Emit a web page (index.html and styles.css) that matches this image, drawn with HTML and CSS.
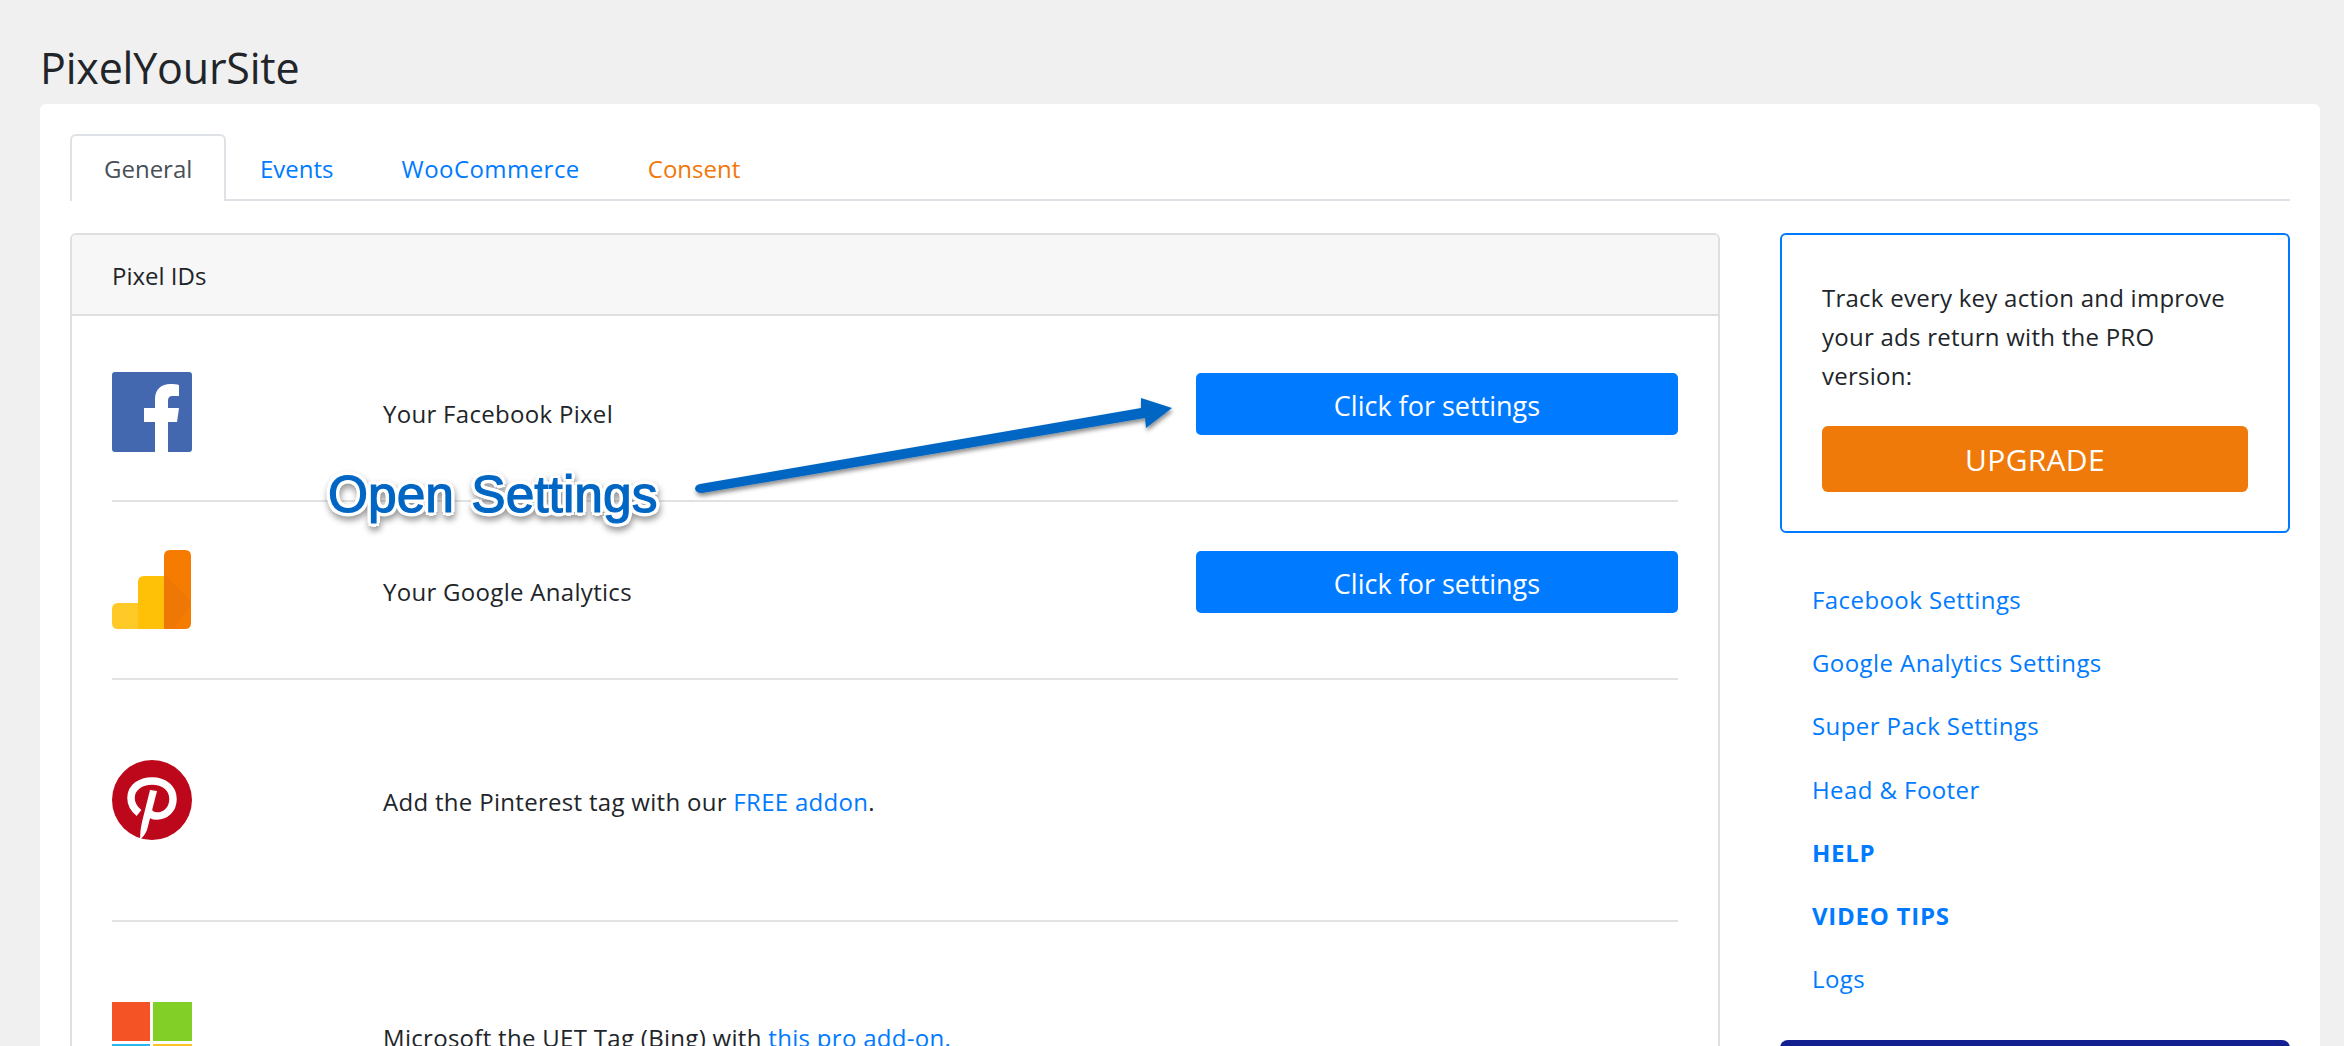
FILE: index.html
```html
<!DOCTYPE html>
<html lang="en">
<head>
<meta charset="utf-8">
<title>PixelYourSite</title>
<link rel="stylesheet" href="styles.css">
</head>
<body>
<h1 class="page-title">PixelYourSite</h1>
<main class="card">
  <nav class="tabs">
    <a class="tab tab-active">General</a>
    <a class="tab">Events</a>
    <a class="tab tab-wide">WooCommerce</a>
    <a class="tab tab-orange">Consent</a>
  </nav>
  <div class="columns">
    <section class="panel">
      <header class="panel-head">Pixel IDs</header>
      <div class="panel-body">
        <div class="row row-first">
          <svg class="icon" viewBox="0 0 80 80"><rect width="80" height="80" rx="3" fill="#4468b0"/><path fill="#fff" d="M43 80V50H32V36H43V27C43 17 50 12 58 12C62 12 65 12 67 13V24H61C57 24 56 26 56 29V36H67L65 50H56V80Z"/></svg>
          <p class="row-text">Your Facebook Pixel</p>
          <a class="btn-settings">Click for settings</a>
        </div>
        <div class="row row-second">
          <svg class="icon" viewBox="0 0 80 80"><path fill="#ffca28" d="M6 53H28V79H6Q0 79 0 73V59Q0 53 6 53Z"/><path fill="#ffc107" d="M32 26H54V79H26V32Q26 26 32 26Z"/><path fill="#f57c00" d="M52 6Q52 0 58 0H73Q79 0 79 6V73Q79 79 73 79H52Z"/><path fill="#e8710a" opacity=".45" d="M52 24L78 50V56L62 79H52Z"/></svg>
          <p class="row-text">Your Google Analytics</p>
          <a class="btn-settings">Click for settings</a>
        </div>
        <div class="row row-tall">
          <svg class="icon" viewBox="0 0 80 80"><circle cx="40" cy="40" r="40" fill="#bd081c"/><path fill="none" stroke="#fff" stroke-width="7.5" d="M27 53C22 49 19 44 19 38C19 27 29 21 40 21C52 21 61 28 61 39C61 50 53 56 45 56C41 56 38 54 37 52"/><path fill="#fff" d="M38 30L45 31L35 70Q32 77 28 79Q28 70 30 62Z"/></svg>
          <p class="row-text">Add the Pinterest tag with our <a class="link">FREE addon</a>.</p>
        </div>
        <div class="row row-last">
          <svg class="icon" viewBox="0 0 80 80"><rect width="38" height="39" fill="#f35325"/><rect x="41" width="39" height="39" fill="#81cf27"/><rect y="42" width="38" height="38" fill="#29b6ef"/><rect x="41" y="42" width="39" height="38" fill="#fdc326"/></svg>
          <p class="row-text">Microsoft the UET Tag (Bing) with <a class="link">this pro add-on.</a></p>
        </div>
      </div>
    </section>
    <aside class="side">
      <div class="promo">
        <p class="promo-text">Track every key action and improve your ads return with the PRO version:</p>
        <a class="btn-upgrade">UPGRADE</a>
      </div>
      <ul class="side-links">
        <li><a class="link">Facebook Settings</a></li>
        <li><a class="link">Google Analytics Settings</a></li>
        <li><a class="link">Super Pack Settings</a></li>
        <li><a class="link">Head &amp; Footer</a></li>
        <li><a class="link link-bold">HELP</a></li>
        <li><a class="link link-bold">VIDEO TIPS</a></li>
        <li><a class="link">Logs</a></li>
      </ul>
      <div class="navy-box"></div>
    </aside>
  </div>
</main>
<svg class="arrow" viewBox="0 0 480 100" width="480" height="100"><defs><filter id="arrow-shadow" x="-5%" y="-20%" width="110%" height="150%"><feDropShadow dx="1" dy="3" stdDeviation="2" flood-color="#000" flood-opacity=".45"/></filter></defs><path filter="url(#arrow-shadow)" fill="#0066c4" d="M5 88L446 12L446 2L477 12L451 32L450 22L7 97Q1 97 0 93Q0 89 5 88Z"/></svg>
<div class="callout">Open Settings</div>
</body>
</html>
```

FILE: styles.css
```css
* { box-sizing: border-box; }
html, body { margin: 0; height: 1046px; overflow: hidden; }
body {
  background: #f0f0f0;
  font-family: "Open Sans", "Noto Sans", sans-serif;
  font-size: 24px;
  color: #212529;
  padding: 0 24px 0 40px;
  position: relative;
}
.page-title {
  margin: 0;
  height: 104px;
  padding-top: 37px;
  font-size: 43px;
  font-weight: 400;
  line-height: 62px;
  letter-spacing: -0.2px;
}
.card {
  background: #fff;
  border-radius: 6px 6px 0 0;
  padding: 30px 30px 0;
  height: 942px;
  overflow: hidden;
}
.tabs {
  display: flex;
  height: 67px;
  border-bottom: 2px solid #dee2e6;
}
.tab {
  height: 67px;
  padding: 20px 34px 0;
  line-height: 30px;
  color: #007bff;
}
.tab-wide { letter-spacing: 0.45px; }
.tab-active {
  color: #495057;
  background: #fff;
  border: 2px solid #dee2e6;
  border-bottom: 0;
  border-radius: 6px 6px 0 0;
  padding: 18px 32px 0;
  width: 156px;
}
.tab-orange { color: #f0780a; }
.columns {
  display: flex;
  gap: 60px;
  margin-top: 32px;
  align-items: flex-start;
}
.panel {
  width: 1650px;
  flex: none;
  height: 900px;
  border: 2px solid #dfdfdf;
  border-radius: 6px 6px 0 0;
}
.panel-head {
  height: 81px;
  background: #f7f7f7;
  border-bottom: 2px solid #dfdfdf;
  border-radius: 4px 4px 0 0;
  padding: 26px 40px 0;
  line-height: 30px;
}
.panel-body { padding: 0 40px; }
.row {
  display: flex;
  align-items: center;
  border-bottom: 2px solid #e2e2e2;
}
.row-first { padding: 56px 0 48px; }
.row-second { padding: 48px 0 48px; }
.row-tall { padding: 80px 0 80px; }
.row-last { padding: 80px 0 0; border-bottom: 0; }
.icon { width: 80px; height: 80px; flex: none; display: block; }
.row-text {
  margin: 0 0 0 191px;
  flex: 1;
  line-height: 34px;
  padding-top: 4px;
  letter-spacing: 0.3px;
}
.row-last .row-text { padding-top: 0; margin-bottom: 9px; }
.link { color: #007bff; }
.btn-settings {
  width: 482px;
  height: 62px;
  margin-top: 1px;
  flex: none;
  align-self: flex-start;
  background: #007bff;
  color: #fff;
  border-radius: 5px;
  text-align: center;
  font-size: 27px;
  line-height: 66px;
}
.side { width: 510px; flex: none; }
.promo {
  height: 300px;
  border: 2px solid #007bff;
  border-radius: 6px;
  padding: 43px 40px 0;
}
.promo-text {
  margin: 0;
  max-width: 410px;
  line-height: 39px;
  letter-spacing: 0.25px;
}
.btn-upgrade {
  display: block;
  margin-top: 31px;
  height: 66px;
  width: 426px;
  background: #ef7909;
  color: #fff;
  border-radius: 6px;
  text-align: center;
  font-size: 30px;
  line-height: 68px;
  letter-spacing: 0.3px;
}
.side-links {
  list-style: none;
  margin: 35px 0 0;
  padding: 0 0 0 32px;
}
.side-links li { height: 63.2px; line-height: 63px; letter-spacing: 0.42px; }
.link-bold { font-weight: 700; letter-spacing: 0.75px; }
.navy-box {
  margin-top: 30px;
  height: 60px;
  background: #12218f;
  border-radius: 8px 8px 0 0;
}
.arrow {
  position: absolute;
  left: 695px;
  top: 396px;
  overflow: visible;
}
.callout {
  position: absolute;
  left: 328px;
  top: 463px;
  font-family: "Liberation Sans", Arial, sans-serif;
  font-size: 51.5px;
  line-height: 62px;
  color: #0066c4;
  white-space: nowrap;
  word-spacing: 3px;
  -webkit-text-stroke: 1.2px #0066c4;
  text-shadow: 4px 0 0 #fff, -4px 0 0 #fff, 0 4px 0 #fff, 0 -4px 0 #fff, 3px 3px 0 #fff, -3px 3px 0 #fff, 3px -3px 0 #fff, -3px -3px 0 #fff;
  filter: drop-shadow(1px 4px 3px rgba(0, 0, 0, .4));
}
```
